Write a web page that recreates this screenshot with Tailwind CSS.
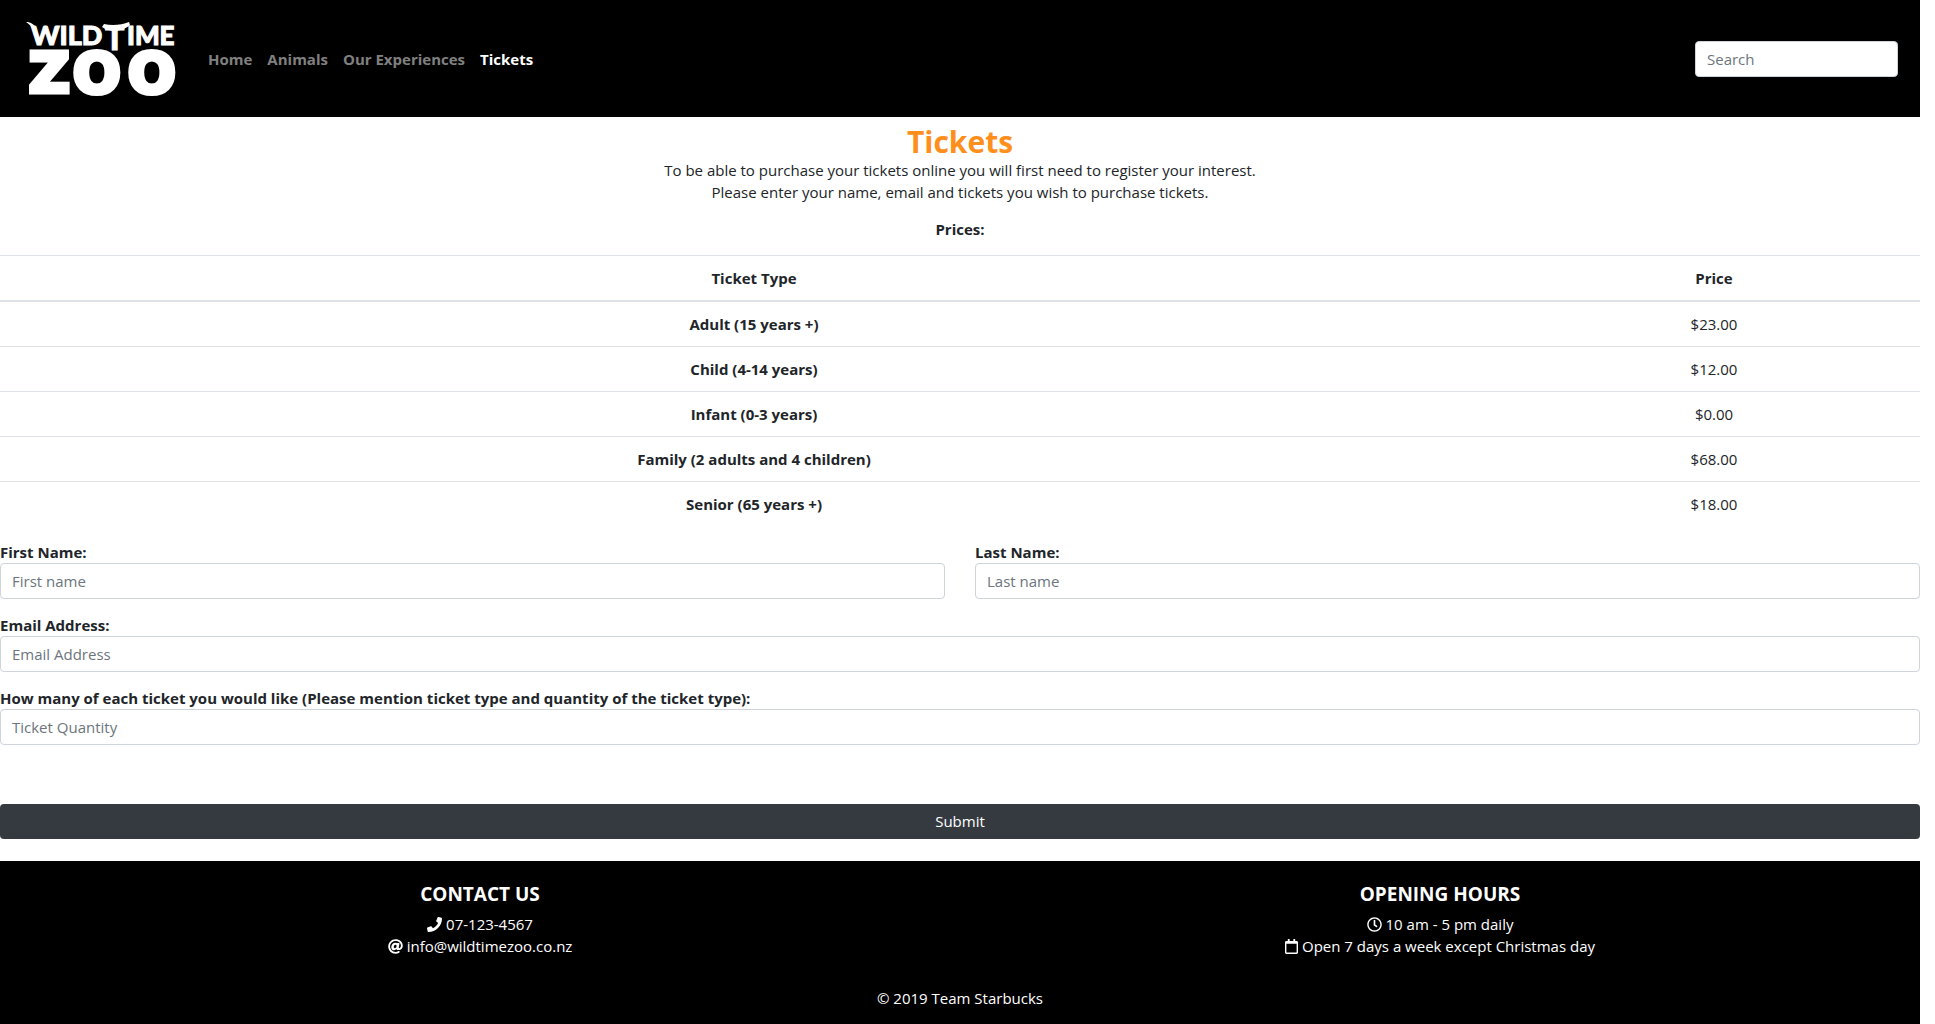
<!DOCTYPE html>
<html lang="en">
<head>
<meta charset="utf-8">
<meta name="viewport" content="width=device-width, initial-scale=1">
<title>Tickets - Wild Time Zoo</title>
<script src="https://cdn.jsdelivr.net/npm/@tailwindcss/browser@4"></script>
</head>
<body class="bg-white pr-[15px] font-['Open_Sans',sans-serif] text-[15px] leading-[22px] text-[#212529]">
<header class="flex items-center bg-black py-[15px] pr-[22px] pl-[22px]">
  <a href="#" aria-label="Wild Time Zoo" class="shrink-0">
    <svg class="block h-[87px] w-[160px] overflow-visible fill-white stroke-white" viewBox="22 15 160 87">
      <g font-family="Lato, sans-serif" font-weight="900" stroke-width="1">
        <text x="31" y="45" font-size="27">WILD</text>
        <text x="105" y="50" font-size="32">T</text>
        <text x="127" y="45" font-size="26">IME</text>
      </g>
      <g stroke="none">
        <path d="M26 22C31 22 34 24 36 29L38 35L34 35C33 29 31 25 26 22Z"/>
        <path d="M102 27L104 24C112 26 122 25 129 22L130 25C127 28 122 30 116 31C109 31 105 29 102 27Z"/>
      </g>
      <g font-family="DejaVu Sans, sans-serif" font-weight="700" font-size="56" stroke-width="5">
        <text y="92"><tspan x="29">Z</tspan><tspan x="73">O</tspan><tspan x="128">O</tspan></text>
      </g>
    </svg>
  </a>
  <nav class="ml-[26px] flex gap-[15px] font-bold text-[#808080]">
    <a href="#">Home</a>
    <a href="#">Animals</a>
    <a href="#">Our Experiences</a>
    <a href="#" class="text-white" aria-current="page">Tickets</a>
  </nav>
  <form class="ml-auto">
    <input type="search" placeholder="Search" aria-label="Search" class="block h-9 w-[203px] rounded-[4px] border border-[#ced4da] bg-white px-[11px] placeholder:text-[#6c757d]">
  </form>
</header>

<main>
  <div class="pt-[7px] text-center">
    <h1 class="text-[30px] leading-[35px] font-bold text-[#ff8f1c]">Tickets</h1>
    <p class="mb-[15px]">To be able to purchase your tickets online you will first need to register your interest.<br>Please enter your name, email and tickets you wish to purchase tickets.</p>
    <p class="mb-[15px] font-bold">Prices:</p>
  </div>
  <table class="w-full table-fixed border-separate border-spacing-0 text-center">
    <colgroup><col><col class="w-[412px]"></colgroup>
    <thead>
      <tr class="*:border-t *:border-b-2 *:border-[#dee2e6] *:py-[11px] *:font-bold"><th scope="col">Ticket Type</th><th scope="col">Price</th></tr>
    </thead>
    <tbody>
      <tr class="*:border-b *:border-[#dee2e6] *:py-[11px]"><th scope="row" class="font-bold">Adult (15 years +)</th><td>$23.00</td></tr>
      <tr class="*:border-b *:border-[#dee2e6] *:py-[11px]"><th scope="row" class="font-bold">Child (4-14 years)</th><td>$12.00</td></tr>
      <tr class="*:border-b *:border-[#dee2e6] *:py-[11px]"><th scope="row" class="font-bold">Infant (0-3 years)</th><td>$0.00</td></tr>
      <tr class="*:border-b *:border-[#dee2e6] *:py-[11px]"><th scope="row" class="font-bold">Family (2 adults and 4 children)</th><td>$68.00</td></tr>
      <tr class="*:py-[11px]"><th scope="row" class="font-bold">Senior (65 years +)</th><td>$18.00</td></tr>
    </tbody>
  </table>

  <form class="mt-[15px] mb-[22px]">
    <div class="grid grid-cols-2 gap-x-[30px] gap-y-[15px]">
      <div>
        <label for="first" class="block font-bold">First Name:</label>
        <input id="first" type="text" placeholder="First name" class="block h-9 w-full rounded-[4px] border border-[#ced4da] bg-white px-[11px] placeholder:text-[#6c757d]">
      </div>
      <div>
        <label for="last" class="block font-bold">Last Name:</label>
        <input id="last" type="text" placeholder="Last name" class="block h-9 w-full rounded-[4px] border border-[#ced4da] bg-white px-[11px] placeholder:text-[#6c757d]">
      </div>
      <div class="col-span-2">
        <label for="email" class="block font-bold">Email Address:</label>
        <input id="email" type="email" placeholder="Email Address" class="block h-9 w-full rounded-[4px] border border-[#ced4da] bg-white px-[11px] placeholder:text-[#6c757d]">
      </div>
      <div class="col-span-2">
        <label for="quantity" class="block font-bold">How many of each ticket you would like (Please mention ticket type and quantity of the ticket type):</label>
        <input id="quantity" type="text" placeholder="Ticket Quantity" class="block h-9 w-full rounded-[4px] border border-[#ced4da] bg-white px-[11px] placeholder:text-[#6c757d]">
      </div>
    </div>
    <button type="submit" class="mt-[59px] block h-[35px] w-full rounded-[4px] bg-[#343a40] pb-[2px] text-white">Submit</button>
  </form>
</main>

<footer class="bg-black pt-[22px] pb-[17px] text-center text-white">
  <div class="grid grid-cols-2">
    <section>
      <h2 class="mb-2 text-[19px] leading-[22px] font-bold">CONTACT US</h2>
      <p class="flex items-center justify-center gap-1">
        <svg class="size-[15px] fill-current" viewBox="0 0 512 512" aria-hidden="true"><path d="M493.400 24.600l-104-24c-11.300-2.600-22.900 3.300-27.500 13.900l-48 112c-4.200 9.800-1.400 21.300 6.900 28l60.600 49.600c-36 76.700-98.900 140.500-177.200 177.200l-49.600-60.600c-6.800-8.300-18.200-11.100-28-6.900l-112 48C3.900 366.500-2 378.100.6 389.400l24 104C27.100 504.200 36.700 512 48 512c256.100 0 464-207.500 464-464 0-11.200-7.700-20.900-18.600-23.400z"/></svg>
        <span>07-123-4567</span>
      </p>
      <p class="flex items-center justify-center gap-1">
        <svg class="size-[15px] fill-current" viewBox="0 0 512 512" aria-hidden="true"><path d="M256 8C118.941 8 8 118.919 8 256c0 137.059 110.919 248 248 248 48.154 0 95.342-14.140 135.408-40.223 12.005-7.815 14.625-24.288 5.552-35.372l-10.177-12.433c-7.671-9.371-21.179-11.667-31.373-5.129C325.920 429.757 291.314 440 256 440c-101.458 0-184-82.542-184-184S154.542 72 256 72c100.139 0 184 57.619 184 160 0 38.786-21.093 79.742-58.170 83.693-17.349-.454-16.910-12.857-13.476-30.024l23.433-121.110C394.653 149.750 383.308 136 368.225 136h-44.981a13.518 13.518 0 0 0-13.432 11.993l-.010.092c-14.697-17.901-40.448-21.775-59.971-21.775-74.580 0-137.831 62.234-137.831 151.460 0 65.303 36.785 105.870 96 105.870 26.984 0 57.369-15.637 74.991-38.333 9.522 34.104 40.613 34.104 70.710 34.104C462.609 379.410 504 307.798 504 232 504 95.653 394.023 8 256 8zm-21.680 304.430c-22.249 0-36.070-15.623-36.070-40.771 0-44.993 30.779-72.729 58.630-72.729 22.292 0 35.601 15.241 35.601 40.770 0 45.061-33.875 72.730-58.161 72.730z"/></svg>
        <span>info@wildtimezoo.co.nz</span>
      </p>
    </section>
    <section>
      <h2 class="mb-2 text-[19px] leading-[22px] font-bold">OPENING HOURS</h2>
      <p class="flex items-center justify-center gap-1">
        <svg class="size-[15px] fill-current" viewBox="0 0 512 512" aria-hidden="true"><path d="M256 8C119 8 8 119 8 256s111 248 248 248 248-111 248-248S393 8 256 8zm0 448c-110.500 0-200-89.500-200-200S145.500 56 256 56s200 89.500 200 200-89.500 200-200 200zm61.800-104.400l-84.900-61.700c-3.100-2.300-4.900-5.900-4.900-9.700V116c0-6.600 5.400-12 12-12h32c6.600 0 12 5.400 12 12v141.700l66.800 48.600c5.400 3.900 6.500 11.400 2.600 16.800L334.600 349c-3.900 5.300-11.400 6.500-16.800 2.600z"/></svg>
        <span>10 am - 5 pm daily</span>
      </p>
      <p class="flex items-center justify-center gap-1">
        <svg class="h-[15px] w-[13px] fill-current" viewBox="0 0 448 512" aria-hidden="true"><path d="M400 64h-48V12c0-6.600-5.400-12-12-12h-40c-6.600 0-12 5.400-12 12v52H160V12c0-6.600-5.400-12-12-12h-40c-6.600 0-12 5.400-12 12v52H48C21.500 64 0 85.500 0 112v352c0 26.500 21.500 48 48 48h352c26.500 0 48-21.500 48-48V112c0-26.500-21.500-48-48-48zm-6 400H54c-3.300 0-6-2.700-6-6V160h352v298c0 3.300-2.700 6-6 6z"/></svg>
        <span>Open 7 days a week except Christmas day</span>
      </p>
    </section>
  </div>
  <p class="mt-[30px]">© 2019 Team Starbucks</p>
</footer>
</body>
</html>
